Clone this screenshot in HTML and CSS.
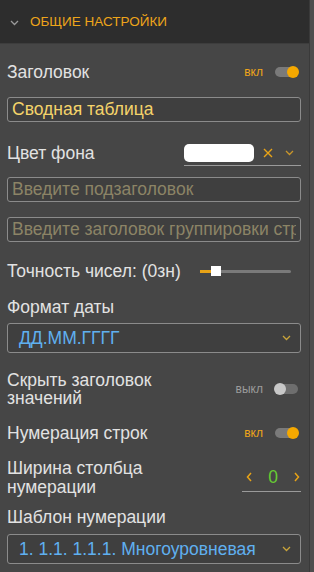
FILE: index.html
```html
<!DOCTYPE html>
<html lang="ru">
<head>
    <meta charset="UTF-8">
    <meta name="viewport" content="width=device-width, initial-scale=1.0">
    <link rel="stylesheet" href="styles.css">
    <title>Общие настройки</title>
</head>
<body>
    <div class="panel">
        <div class="panel-header">
            <svg class="header-chevron" width="9" height="6" viewBox="0 0 9 6"><path d="M1 1 L4.5 4.5 L8 1" fill="none" stroke="#9a9a9a" stroke-width="1.3"/></svg>
            <span>ОБЩИЕ НАСТРОЙКИ</span>
        </div>
        <div class="panel-body">
            <div class="row row-title">
                <span class="label">Заголовок</span>
                <div class="switch-wrap">
                    <span class="switch-text on">вкл</span>
                    <span class="switch on"><span class="knob"></span></span>
                </div>
            </div>

            <div class="field field-title">
                <input type="text" class="text-input value" value="Сводная таблица">
            </div>

            <div class="row row-color">
                <span class="label">Цвет фона</span>
                <div class="color-pick">
                    <span class="color-box"></span>
                    <svg class="icon-x" width="10" height="10" viewBox="0 0 10 10"><path d="M1 1 L9 9 M9 1 L1 9" stroke="#e8a317" stroke-width="1.4"/></svg>
                    <svg class="icon-down" width="9" height="6" viewBox="0 0 9 6"><path d="M1 1 L4.5 4.5 L8 1" fill="none" stroke="#c9962a" stroke-width="1.3"/></svg>
                </div>
            </div>

            <div class="field field-sub">
                <input type="text" class="text-input" placeholder="Введите подзаголовок">
            </div>

            <div class="field field-group">
                <input type="text" class="text-input" placeholder="Введите заголовок группировки строк">
            </div>

            <div class="row row-slider">
                <span class="label">Точность чисел: (0зн)</span>
                <div class="slider">
                    <span class="slider-fill"></span>
                    <span class="slider-thumb"></span>
                </div>
            </div>

            <div class="label block-label label-date">Формат даты</div>
            <div class="select select-date">
                <span class="select-value">ДД.ММ.ГГГГ</span>
                <svg width="9" height="6" viewBox="0 0 9 6"><path d="M1 1 L4.5 4.5 L8 1" fill="none" stroke="#c9a43a" stroke-width="1.3"/></svg>
            </div>

            <div class="row row-hide">
                <span class="label two-lines">Скрыть заголовок<br>значений</span>
                <div class="switch-wrap">
                    <span class="switch-text">выкл</span>
                    <span class="switch"><span class="knob"></span></span>
                </div>
            </div>

            <div class="row row-numbering">
                <span class="label">Нумерация строк</span>
                <div class="switch-wrap">
                    <span class="switch-text on">вкл</span>
                    <span class="switch on"><span class="knob"></span></span>
                </div>
            </div>

            <div class="row row-width">
                <span class="label two-lines">Ширина столбца<br>нумерации</span>
                <div class="stepper">
                    <svg width="6" height="10" viewBox="0 0 6 10"><path d="M5 1 L1.5 5 L5 9" fill="none" stroke="#e8a317" stroke-width="1.5"/></svg>
                    <span class="stepper-value">0</span>
                    <svg width="6" height="10" viewBox="0 0 6 10"><path d="M1 1 L4.5 5 L1 9" fill="none" stroke="#e8a317" stroke-width="1.5"/></svg>
                </div>
            </div>

            <div class="label block-label label-template">Шаблон нумерации</div>
            <div class="select select-template">
                <span class="select-value">1. 1.1. 1.1.1. Многоуровневая</span>
                <svg width="9" height="6" viewBox="0 0 9 6"><path d="M1 1 L4.5 4.5 L8 1" fill="none" stroke="#c9a43a" stroke-width="1.3"/></svg>
            </div>
        </div>
    </div>
</body>
</html>
```

FILE: styles.css
```css
html, body {
    margin: 0;
    padding: 0;
    height: 100%;
    background: #4e4e4e;
    font-family: "Liberation Sans", Arial, sans-serif;
}

.panel {
    width: 309px;
    height: 100%;
    background: #464646;
    border-right: 1px solid #3a3a3a;
    overflow: hidden;
}

.panel-header {
    height: 44px;
    background: #2d2d2d;
    display: flex;
    align-items: center;
    padding-left: 10px;
    border-bottom: 1px solid #3d3d3d;
    box-sizing: border-box;
    color: #eea51a;
    font-size: 13.5px;
}

.header-chevron {
    margin-right: 11px;
    margin-top: 3px;
}

.panel-body {
    padding: 0 8px 0 7px;
}

.label {
    color: #e2e2e2;
    font-size: 17.5px;
    white-space: nowrap;
}

.row {
    display: flex;
    align-items: center;
    justify-content: space-between;
}

.row-title {
    height: 24px;
    margin-top: 16px;
}

.switch-wrap {
    display: flex;
    align-items: center;
    gap: 12px;
    padding-right: 3px;
}

.switch-text {
    font-size: 12px;
    color: #9c9c9c;
}

.switch-text.on {
    color: #eea51a;
}

.switch {
    width: 23px;
    height: 10px;
    border-radius: 5px;
    background: #6e6e6e;
    position: relative;
    display: inline-block;
}

.knob {
    position: absolute;
    top: -1px;
    left: -1px;
    width: 12px;
    height: 12px;
    border-radius: 50%;
    background: #c8c8c8;
}

.switch.on {
    background: #7a7a7a;
}

.switch.on .knob {
    left: auto;
    right: -1px;
    background: #f5a800;
}

.field {
    height: 25px;
}

.text-input {
    width: 100%;
    height: 25px;
    box-sizing: border-box;
    background: #3f3f3f;
    border: 1px solid #8b8b8b;
    border-radius: 3px;
    padding: 0 4px;
    font-family: "Liberation Sans", Arial, sans-serif;
    font-size: 17.5px;
    color: #f4d36a;
    outline: none;
}

.text-input::placeholder {
    color: #8c8466;
}

.field-title {
    margin-top: 13px;
}

.row-color {
    height: 26px;
    margin-top: 18px;
}

.color-pick {
    display: flex;
    align-items: center;
    width: 117px;
    padding: 3px 0 3px 0;
    border-bottom: 1px solid #9a9a9a;
}

.color-box {
    width: 70px;
    height: 18px;
    border-radius: 5px;
    background: #ffffff;
}

.icon-x {
    margin-left: 9px;
}

.icon-down {
    margin-left: 12px;
}

.field-sub {
    margin-top: 11px;
}

.field-group {
    margin-top: 15px;
}

.row-slider {
    height: 20px;
    margin-top: 19px;
    justify-content: flex-start;
}

.slider {
    position: relative;
    width: 91px;
    height: 3px;
    margin-left: 19px;
    background: #7a7a7a;
    border-radius: 2px;
}

.slider-fill {
    position: absolute;
    left: 0;
    top: 0;
    width: 11px;
    height: 3px;
    background: #e8a317;
}

.slider-thumb {
    position: absolute;
    left: 11px;
    top: -4px;
    width: 10px;
    height: 10px;
    background: #ffffff;
}

.block-label {
    height: 20px;
    line-height: 20px;
}

.label-date {
    margin-top: 16px;
}

.select {
    height: 30px;
    box-sizing: border-box;
    border: 1px solid #8b8b8b;
    border-radius: 3px;
    background: #3f3f3f;
    display: flex;
    align-items: center;
    justify-content: space-between;
    padding: 0 9px 0 11px;
}

.select-value {
    color: #5fb0f0;
    font-size: 17.5px;
}

.select-date {
    margin-top: 6px;
}

.two-lines {
    line-height: 18px;
}

.row-hide {
    height: 36px;
    margin-top: 18px;
}

.row-numbering {
    height: 20px;
    margin-top: 16px;
}

.row-width {
    height: 38px;
    margin-top: 16px;
}

.row-width .two-lines {
    line-height: 19px;
}

.stepper {
    display: flex;
    align-items: center;
    justify-content: space-between;
    width: 54px;
    padding: 0 1px 3px 4px;
    border-bottom: 1px solid #9a9a9a;
    margin-top: 2px;
}

.stepper-value {
    color: #66cc33;
    font-size: 17.5px;
}

.label-template {
    margin-top: 10px;
}

.select-template {
    margin-top: 7px;
}
```
